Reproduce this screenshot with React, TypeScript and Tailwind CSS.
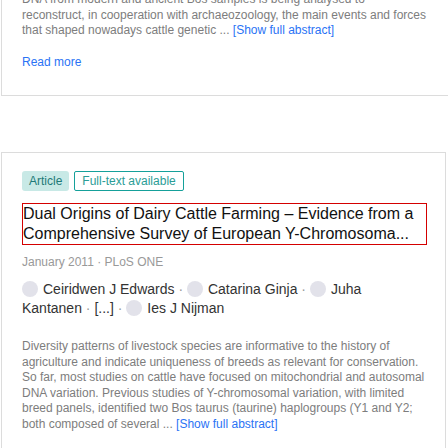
import React from "react";

function Avatar() {
  return (
    <span className="inline-block w-4 h-4 rounded-full bg-[#e2e2ea] align-[-3px] mr-[5px]" />
  );
}

function Sep() {
  return <span className="text-[#999]"> · </span>;
}

export default function App() {
  return (
    <div className="h-[448px] overflow-hidden bg-white font-['Liberation_Sans',Arial,sans-serif] pl-px pr-[2px]">
      <div className="mt-[-29px] border border-[#dcdcdc] border-r-0 pl-5 pr-3 pt-5 pb-[25px] mr-[-4px]">
        <p className="text-[12px] leading-[15.5px] text-[#7d7d7d]">
          DNA from modern and ancient Bos samples is being analysed to
          <br />
          reconstruct, in cooperation with archaeozoology, the main events and forces
          <br />
          that shaped nowadays cattle genetic ...{" "}
          <span className="text-[#2a73f5]">[Show full abstract]</span>
        </p>
        <div className="mt-4 text-[12px] leading-[15.5px] text-[#2a73f5]">Read more</div>
      </div>

      <div className="mt-[56px] border border-[#dcdcdc] pl-5 pr-3 pt-[18px] pb-6">
        <div className="flex gap-[5px]">
          <span className="h-5 flex items-center px-[7px] rounded-[3px] bg-[#c8e9e6] text-[12px] text-[#1d7a78]">
            Article
          </span>
          <span className="h-5 flex items-center px-[7px] rounded-[2px] border border-[#15a09a] text-[12px] text-[#2a9d96]">
            Full-text available
          </span>
        </div>
        <div className="mt-3 w-[405px] border border-[#d40000] text-[16px] leading-5 text-[#111]">
          Dual Origins of Dairy Cattle Farming – Evidence from a Comprehensive Survey of European Y-Chromosoma...
        </div>
        <div className="mt-[10px] text-[12px] leading-[15px] text-[#999]">January 2011 · PLoS ONE</div>
        <div className="mt-[10px] max-w-[380px] text-[14px] leading-[19px] text-[#333]">
          <Avatar />Ceiridwen J Edwards<Sep />
          <Avatar />Catarina Ginja<Sep />
          <Avatar />Juha Kantanen<Sep />
          [...]<Sep />
          <Avatar />Ies J Nijman
        </div>
        <p className="mt-[21px] text-[12px] leading-[15.5px] text-[#7d7d7d]">
          Diversity patterns of livestock species are informative to the history of agriculture and indicate uniqueness of breeds as relevant for conservation. So far, most studies on cattle have focused on mitochondrial and autosomal DNA variation. Previous studies of Y-chromosomal variation, with limited breed panels, identified two Bos taurus (taurine) haplogroups (Y1 and Y2; both composed of several ...{" "}
          <span className="text-[#2a73f5]">[Show full abstract]</span>
        </p>
      </div>
    </div>
  );
}
